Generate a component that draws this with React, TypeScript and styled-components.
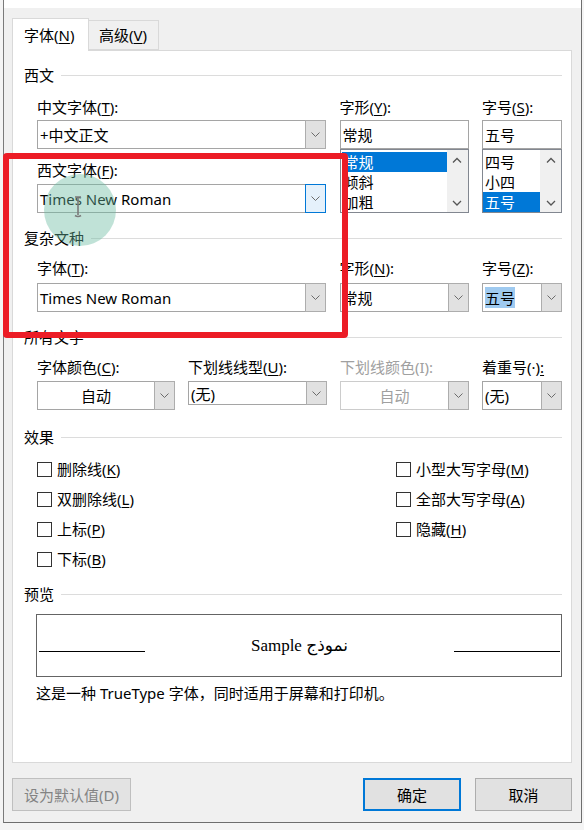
import styled, { createGlobalStyle } from 'styled-components';

const GlobalStyle = createGlobalStyle`
  body {
    margin: 0;
    background: #ffffff;
    font-family: 'Noto Sans', 'Noto Sans CJK SC', sans-serif;
    font-size: 15px;
    color: #000;
  }
`;

const Page = styled.div`
  position: relative;
  width: 584px;
  height: 830px;
  overflow: hidden;
  background: #f4f4f4;
`;

const Dialog = styled.div`
  margin-left: 3px;
  width: 579px;
  height: 823px;
  box-sizing: border-box;
  border-left: 1px solid #7a7a7a;
  border-right: 1px solid #6e6e6e;
  border-bottom: 1px solid #6e6e6e;
  background: #f0f0f0;
  display: flex;
  flex-direction: column;
`;

const TitleStrip = styled.div`
  height: 8px;
  background: #ffffff;
`;

const Content = styled.div`
  padding: 10px 9px 0 8px;
  display: flex;
  flex-direction: column;
`;

const TabBar = styled.div`
  position: relative;
  z-index: 1;
  display: flex;
  align-items: flex-end;
  height: 33px;
  margin-bottom: -1px;
`;

const Tab = styled.div<{ $active?: boolean }>`
  box-sizing: border-box;
  display: flex;
  align-items: center;
  height: ${(p) => (p.$active ? '33px' : '30px')};
  margin-bottom: ${(p) => (p.$active ? '0' : '1px')};
  width: ${(p) => (p.$active ? '77px' : '71px')};
  padding: ${(p) => (p.$active ? '0 0 0 11px' : '0 0 0 10px')};
  margin-left: ${(p) => (p.$active ? '0' : '-1px')};
  background: ${(p) => (p.$active ? '#ffffff' : '#f0f0f0')};
  border: 1px solid #d9d9d9;
  border-bottom: ${(p) => (p.$active ? 'none' : '1px solid #d9d9d9')};
  line-height: 20px;
`;

const Panel = styled.div`
  box-sizing: border-box;
  height: 713px;
  background: #ffffff;
  border: 1px solid #d9d9d9;
  padding: 0 9px 0 11px;
  display: flex;
  flex-direction: column;
`;

const SectionHeader = styled.div<{ $mt: number }>`
  display: flex;
  align-items: center;
  gap: 7px;
  height: 20px;
  margin-top: ${(p) => p.$mt}px;
  line-height: 20px;
  &::after {
    content: '';
    flex: 1;
    height: 1px;
    background: #dcdcdc;
  }
`;

const FieldGrid = styled.div<{ $mt: number; $cols: string }>`
  display: grid;
  grid-template-columns: ${(p) => p.$cols};
  justify-content: space-between;
  margin-top: ${(p) => p.$mt}px;
  padding-left: 13px;
`;

const Field = styled.div`
  display: flex;
  flex-direction: column;
`;

const Label = styled.div<{ $mt?: number; $muted?: boolean }>`
  height: 20px;
  line-height: 20px;
  margin-top: ${(p) => p.$mt ?? 0}px;
  color: ${(p) => (p.$muted ? '#a0a0a0' : '#000')};
  white-space: nowrap;
`;

const Key = styled.span`
  text-decoration: underline;
  text-decoration-thickness: 1px;
  text-underline-offset: 2px;
`;

const Combo = styled.div<{ $mt: number; $h?: number; $muted?: boolean }>`
  display: flex;
  box-sizing: border-box;
  height: ${(p) => p.$h ?? 29}px;
  margin-top: ${(p) => p.$mt}px;
  border: 1px solid ${(p) => (p.$muted ? '#cccccc' : '#a5a5a5')};
  background: #ffffff;
`;

const ComboValue = styled.div<{ $center?: boolean; $muted?: boolean }>`
  flex: 1;
  display: flex;
  align-items: center;
  justify-content: ${(p) => (p.$center ? 'center' : 'flex-start')};
  padding: 0 2px;
  color: ${(p) => (p.$muted ? '#a0a0a0' : '#000')};
  white-space: nowrap;
  overflow: hidden;
`;

const DropButton = styled.div<{ $focus?: boolean }>`
  box-sizing: border-box;
  width: 21px;
  margin: -1px -1px -1px 0;
  border: 1px solid ${(p) => (p.$focus ? '#0078d7' : '#adadad')};
  background: ${(p) => (p.$focus ? '#e5f1fb' : '#e1e1e1')};
  display: flex;
  align-items: center;
  justify-content: center;
`;

const Highlight = styled.span`
  background: #9fcaf0;
`;

const ListBox = styled.div`
  display: flex;
  box-sizing: border-box;
  height: 64px;
  border: 1px solid #828790;
  background: #ffffff;
`;

const ListItems = styled.div<{ $inset?: number }>`
  flex: 1;
  padding: 2px 0 0 ${(p) => p.$inset ?? 0}px;
`;

const ListItem = styled.div<{ $selected?: boolean }>`
  height: 20px;
  line-height: 20px;
  padding-left: 2px;
  background: ${(p) => (p.$selected ? '#0078d7' : 'transparent')};
  color: ${(p) => (p.$selected ? '#ffffff' : '#000')};
`;

const ScrollBar = styled.div`
  width: 21px;
  background: #f0f0f0;
  display: flex;
  flex-direction: column;
  align-items: center;
  justify-content: space-between;
  padding: 7px 0 6px;
  box-sizing: border-box;
`;

const CheckGrid = styled.div`
  display: grid;
  grid-template-columns: 359px 1fr;
  grid-auto-rows: 30px;
  margin-top: 7px;
  padding-left: 13px;
`;

const CheckRow = styled.div`
  display: flex;
  align-items: center;
  gap: 5px;
`;

const CheckBox = styled.span`
  box-sizing: border-box;
  width: 15px;
  height: 15px;
  border: 1px solid #333333;
  background: #ffffff;
`;

const CheckLabel = styled.span`
  line-height: 20px;
  white-space: nowrap;
`;

const PreviewBox = styled.div`
  box-sizing: border-box;
  display: flex;
  align-items: center;
  height: 63px;
  margin: 10px 0 0 12px;
  padding: 0 1px 0 2px;
  border: 1px solid #646464;
`;

const PreviewLine = styled.div`
  width: 106px;
  height: 1px;
  margin-top: 12px;
  background: #000000;
`;

const SampleText = styled.div`
  flex: 1;
  text-align: center;
  font-family: 'Liberation Serif', 'DejaVu Sans', serif;
  font-size: 17px;
`;

const Description = styled.div`
  height: 20px;
  line-height: 20px;
  margin: 6px 0 0 12px;
`;

const Footer = styled.div`
  display: flex;
  align-items: center;
  gap: 14px;
  margin-top: 15px;
`;

const Button = styled.div<{ $width: number; $kind?: 'default' | 'disabled' }>`
  box-sizing: border-box;
  width: ${(p) => p.$width}px;
  height: 33px;
  display: flex;
  align-items: center;
  justify-content: center;
  background: ${(p) => (p.$kind === 'disabled' ? '#e3e3e3' : '#e1e1e1')};
  border: ${(p) =>
    p.$kind === 'default'
      ? '2px solid #0078d7'
      : p.$kind === 'disabled'
      ? '1px solid #bfbfbf'
      : '1px solid #adadad'};
  color: ${(p) => (p.$kind === 'disabled' ? '#838383' : '#000')};
`;

const Spacer = styled.div`
  flex: 1;
`;

const RedFrame = styled.div`
  position: absolute;
  left: 3px;
  top: 153px;
  width: 345px;
  height: 185px;
  box-sizing: border-box;
  border: 6px solid #ec1c26;
  border-radius: 4px;
  pointer-events: none;
`;

const ClickSpot = styled.div`
  position: absolute;
  left: 44px;
  top: 174px;
  width: 72px;
  height: 72px;
  border-radius: 50%;
  background: rgba(105, 185, 160, 0.42);
  pointer-events: none;
`;

const Cursor = styled.svg`
  position: absolute;
  left: 73px;
  top: 196px;
  pointer-events: none;
`;

const Chevron = ({ up }: { up?: boolean }) => (
  <svg width="10" height="6" viewBox="0 0 10 6">
    <path
      d={up ? 'M1 5.5 L5 1.5 L9 5.5' : 'M1 1 L5 5 L9 1'}
      stroke="#555"
      strokeWidth="1.3"
      fill="none"
    />
  </svg>
);

const SmallChevron = () => (
  <svg width="9" height="5" viewBox="0 0 9 5">
    <path d="M0.5 0.5 L4.5 4.5 L8.5 0.5" stroke="#6b6b6b" strokeWidth="1" fill="none" />
  </svg>
);

const effects: { text: string; key: string }[] = [
  { text: '删除线', key: 'K' },
  { text: '小型大写字母', key: 'M' },
  { text: '双删除线', key: 'L' },
  { text: '全部大写字母', key: 'A' },
  { text: '上标', key: 'P' },
  { text: '隐藏', key: 'H' },
  { text: '下标', key: 'B' },
];

const App = () => {
  return (
    <>
      <GlobalStyle />
      <Page>
        <Dialog>
          <TitleStrip />
          <Content>
            <TabBar>
              <Tab $active>
                字体(<Key>N</Key>)
              </Tab>
              <Tab>
                高级(<Key>V</Key>)
              </Tab>
            </TabBar>
            <Panel>
              <SectionHeader $mt={14}>西文</SectionHeader>
              <FieldGrid $mt={12} $cols="289px 129px 80px">
                <Field>
                  <Label>
                    中文字体(<Key>T</Key>):
                  </Label>
                  <Combo $mt={3}>
                    <ComboValue>+中文正文</ComboValue>
                    <DropButton>
                      <SmallChevron />
                    </DropButton>
                  </Combo>
                  <Label $mt={11}>
                    西文字体(<Key>F</Key>):
                  </Label>
                  <Combo $mt={4}>
                    <ComboValue>Times New Roman</ComboValue>
                    <DropButton $focus>
                      <SmallChevron />
                    </DropButton>
                  </Combo>
                </Field>
                <Field>
                  <Label>
                    字形(<Key>Y</Key>):
                  </Label>
                  <Combo $mt={3}>
                    <ComboValue>常规</ComboValue>
                  </Combo>
                  <ListBox>
                    <ListItems $inset={1}>
                      <ListItem $selected>常规</ListItem>
                      <ListItem>倾斜</ListItem>
                      <ListItem>加粗</ListItem>
                    </ListItems>
                    <ScrollBar>
                      <Chevron up />
                      <Chevron />
                    </ScrollBar>
                  </ListBox>
                </Field>
                <Field>
                  <Label>
                    字号(<Key>S</Key>):
                  </Label>
                  <Combo $mt={3}>
                    <ComboValue>五号</ComboValue>
                  </Combo>
                  <ListBox>
                    <ListItems>
                      <ListItem>四号</ListItem>
                      <ListItem>小四</ListItem>
                      <ListItem $selected>五号</ListItem>
                    </ListItems>
                    <ScrollBar>
                      <Chevron up />
                      <Chevron />
                    </ScrollBar>
                  </ListBox>
                </Field>
              </FieldGrid>

              <SectionHeader $mt={15}>复杂文种</SectionHeader>
              <FieldGrid $mt={10} $cols="289px 129px 80px">
                <Field>
                  <Label>
                    字体(<Key>T</Key>):
                  </Label>
                  <Combo $mt={5}>
                    <ComboValue>Times New Roman</ComboValue>
                    <DropButton>
                      <SmallChevron />
                    </DropButton>
                  </Combo>
                </Field>
                <Field>
                  <Label>
                    字形(<Key>N</Key>):
                  </Label>
                  <Combo $mt={5}>
                    <ComboValue>常规</ComboValue>
                    <DropButton>
                      <SmallChevron />
                    </DropButton>
                  </Combo>
                </Field>
                <Field>
                  <Label>
                    字号(<Key>Z</Key>):
                  </Label>
                  <Combo $mt={5}>
                    <ComboValue>
                      <Highlight>五号</Highlight>
                    </ComboValue>
                    <DropButton>
                      <SmallChevron />
                    </DropButton>
                  </Combo>
                </Field>
              </FieldGrid>

              <SectionHeader $mt={15}>所有文字</SectionHeader>
              <FieldGrid $mt={10} $cols="138px 139px 129px 80px">
                <Field>
                  <Label>
                    字体颜色(<Key>C</Key>):
                  </Label>
                  <Combo $mt={4}>
                    <ComboValue $center>自动</ComboValue>
                    <DropButton>
                      <SmallChevron />
                    </DropButton>
                  </Combo>
                </Field>
                <Field>
                  <Label>
                    下划线线型(<Key>U</Key>):
                  </Label>
                  <Combo $mt={4} $h={24}>
                    <ComboValue>(无)</ComboValue>
                    <DropButton>
                      <SmallChevron />
                    </DropButton>
                  </Combo>
                </Field>
                <Field>
                  <Label $muted>下划线颜色(I):</Label>
                  <Combo $mt={4} $muted>
                    <ComboValue $center $muted>
                      自动
                    </ComboValue>
                    <DropButton>
                      <SmallChevron />
                    </DropButton>
                  </Combo>
                </Field>
                <Field>
                  <Label>
                    着重号(·)<Key>:</Key>
                  </Label>
                  <Combo $mt={4}>
                    <ComboValue>(无)</ComboValue>
                    <DropButton>
                      <SmallChevron />
                    </DropButton>
                  </Combo>
                </Field>
              </FieldGrid>

              <SectionHeader $mt={17}>效果</SectionHeader>
              <CheckGrid>
                {effects.map((e) => (
                  <CheckRow key={e.key}>
                    <CheckBox />
                    <CheckLabel>
                      {e.text}(<Key>{e.key}</Key>)
                    </CheckLabel>
                  </CheckRow>
                ))}
              </CheckGrid>

              <SectionHeader $mt={10}>预览</SectionHeader>
              <PreviewBox>
                <PreviewLine />
                <SampleText>Sample نموذج</SampleText>
                <PreviewLine />
              </PreviewBox>
              <Description>这是一种 TrueType 字体，同时适用于屏幕和打印机。</Description>
            </Panel>

            <Footer>
              <Button $width={119} $kind="disabled">
                设为默认值(D)
              </Button>
              <Spacer />
              <Button $width={98} $kind="default">
                确定
              </Button>
              <Button $width={97}>取消</Button>
            </Footer>
          </Content>
        </Dialog>

        <ClickSpot />
        <Cursor width="10" height="22" viewBox="0 0 10 22">
          <path d="M2 1 H8 M5 1 V19 M2 19.5 Q5 21.5 8 19.5" stroke="#7a7a7a" strokeWidth="1.6" fill="none" />
        </Cursor>
        <RedFrame />
      </Page>
    </>
  );
};

export default App;
